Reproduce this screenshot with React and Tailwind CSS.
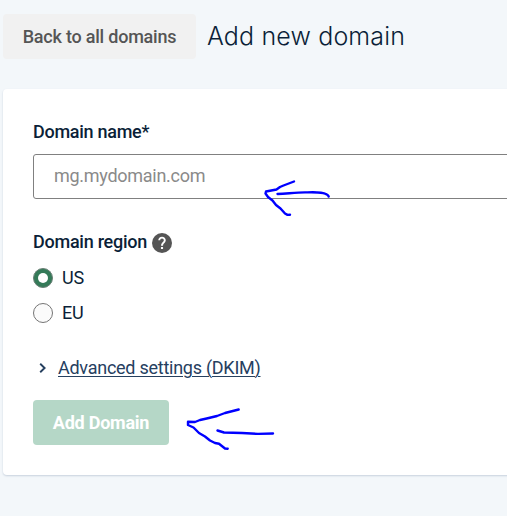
function Radio({ label, checked }) {
  return (
    <label className="flex items-center gap-[9px] h-5 text-lg tracking-[-0.2px] text-[#0b1f38]">
      <span
        className={
          checked
            ? 'size-5 rounded-full border border-[#6b7f76] bg-[#347a58] flex items-center justify-center'
            : 'size-5 rounded-full border border-[#757575] bg-[#fbfbfb]'
        }
      >
        {checked && <span className="size-[10px] rounded-full bg-white" />}
      </span>
      {label}
    </label>
  )
}

export default function App() {
  return (
    <div className="relative h-[516px] w-[507px] overflow-hidden bg-[#f3f7fa] pl-[3px] pt-[14px] font-['Roboto',sans-serif]">
      {/* Header */}
      <header className="flex h-[45px] items-center">
        <button className="h-[45px] w-[193px] rounded-[4px] bg-[#f1f1f1] text-lg font-medium tracking-[-0.22px] text-[#555555] whitespace-nowrap">
          Back to all domains
        </button>
        <h1 className="ml-[11px] text-[25px] leading-[45px] font-light tracking-[0.15px] text-[#0b1f38] font-['Inter',sans-serif] whitespace-nowrap">
          Add new domain
        </h1>
      </header>

      {/* Form card */}
      <main className="mt-[30px] h-[386px] w-[520px] rounded-[4px] bg-white pl-[30px] pt-[30px] shadow-[0_1px_2px_rgba(30,60,110,0.2)]">
        <p className="h-[26px] text-lg leading-[26px] font-medium tracking-[-0.28px] text-[#0b1f38]">Domain name*</p>
        <input
          className="mt-[9px] block h-[45px] w-[500px] rounded-[3px] border border-[#808080] bg-white px-5 pb-[2px] text-lg tracking-[-0.28px] placeholder:text-[#8a8a8a]"
          placeholder="mg.mydomain.com"
        />

        <div className="mt-[31px] flex h-[26px] items-center gap-[5px] text-lg font-medium tracking-[-0.25px] text-[#0b1f38]">
          <span className="-mt-[2px]">Domain region</span>
          <svg className="size-5" viewBox="0 0 24 24" fill="none">
            <circle cx="12" cy="12" r="12" fill="#555555" />
            <path
              fill="#ffffff"
              transform="translate(1.300 1.600) scale(0.9)"
              d="M10.500 16.800h2.800v2.800h-2.800zM16 10.700l-1.200 1.200c-1 1-1.500 1.700-1.500 3.400h-2.700v-.7c0-1.400.6-2.500 1.500-3.400l1.500-1.600c.5-.4.7-1 .7-1.600 0-1.300-1-2.300-2.400-2.300S9.500 6.700 9.500 8H6.900c0-2.800 2.200-4.900 5-4.900s5 2.100 5 4.900c0 1-.4 2-.9 2.700z"
            />
          </svg>
        </div>

        <div className="mt-3 flex flex-col gap-[15px]">
          <Radio label="US" checked />
          <Radio label="EU" />
        </div>

        <div className="mt-8 flex h-[26px] items-center">
          <svg className="ml-[6px] h-[10px] w-[7px]" viewBox="0 0 7 10" fill="none" stroke="#26405f" strokeWidth="1.9">
            <path d="M1.200 0.800L5.600 5L1.200 9.200" />
          </svg>
          <a className="ml-3 text-lg tracking-[-0.26px] text-[#26405f] underline decoration-1 underline-offset-2">
            Advanced settings (DKIM)
          </a>
        </div>

        <button className="mt-[19px] h-[45px] w-[136px] rounded-[4px] bg-[#b5d7c7] text-lg font-bold tracking-[-0.25px] text-white whitespace-nowrap">
          Add Domain
        </button>
      </main>

      {/* Hand-drawn arrows over the form */}
      <svg
        className="pointer-events-none absolute inset-0 h-[516px] w-[507px]"
        viewBox="0 0 507 516"
        fill="none"
        stroke="#0000ff"
        strokeWidth="2.4"
        strokeLinecap="round"
        strokeLinejoin="round"
      >
        <path d="M294 181.500L283.500 185.500L280 187L276.500 189.500L266 191.500L265.500 193.500L268 197L272.500 200.500L276 205L280.500 208.500L285 213.500L287.500 214.900L290 214.700" />
        <path d="M277.500 194C288 193.500 296 192.500 305 192.400C315 192.200 327 191.500 328.700 196.500" />
        <path d="M238.700 409.500L225 413L217 416L206.700 418.500L200 420L195 422L188 421.700L188 425L193.500 427.500L199 433L205 436.500L210 440.500L215 443L219 443.700L225 448.500L227.700 448.700" />
        <path d="M217.500 430.500L224 432.500L242 433L258 433.900L273 433.500" />
      </svg>
    </div>
  )
}
